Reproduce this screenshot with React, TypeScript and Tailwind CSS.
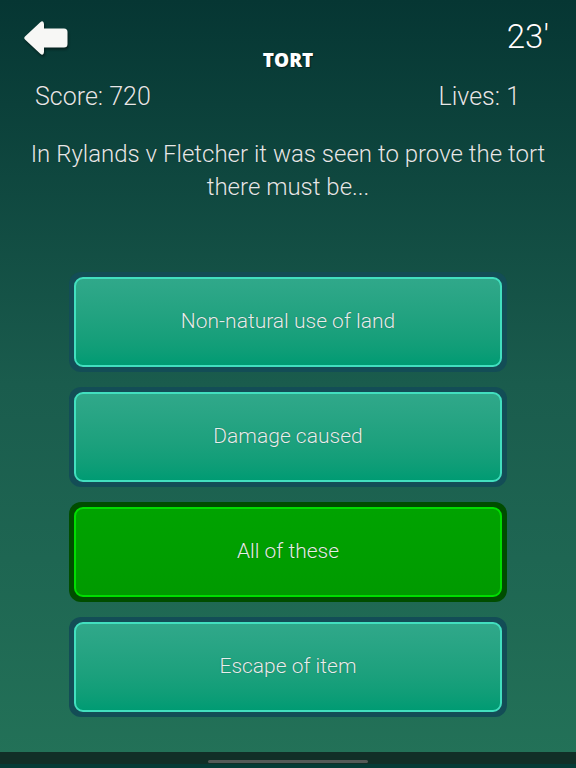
import { useState } from "react";

type Answer = {
  label: string;
  correct?: boolean;
};

const answers: Answer[] = [
  { label: "Non-natural use of land" },
  { label: "Damage caused" },
  { label: "All of these", correct: true },
  { label: "Escape of item" },
];

const BackArrow = () => (
  <svg width="46" height="36" viewBox="0 0 46 36" className="drop-shadow-[1px_2px_1px_rgba(0,0,0,0.45)]">
    <path
      d="M2 19.5 Q0.5 18 2 16.5 L17 2.5 Q20.5 -0.5 21 4 L21 8.5 L41 8.5 Q44.5 8.5 44.5 12 L44.5 24 Q44.5 27.5 41 27.5 L21 27.5 L21 32 Q20.5 36.5 17 33.5 Z"
      fill="#f7f7f5"
    />
  </svg>
);

const AnswerButton = ({ answer }: { answer: Answer }) => {
  const outer = answer.correct ? "bg-[#004d00]" : "bg-[#134d56]";
  const inner = answer.correct
    ? "border-[#00dd00] bg-gradient-to-b from-[#00a300] to-[#009a00]"
    : "border-[#42dfbf] bg-gradient-to-b from-[#30a88a] to-[#009b73]";

  return (
    <button className={`h-[100px] w-[438px] rounded-[12px] p-[5px] ${outer}`}>
      <div
        className={`flex h-full w-full items-center justify-center rounded-[9px] border-2 ${inner}`}
      >
        <span className="text-[21px] font-light text-white/90 [text-shadow:0_0_1px_rgba(0,0,0,0.5)]">
          {answer.label}
        </span>
      </div>
    </button>
  );
};

export default function App() {
  const [score] = useState(720);
  const [lives] = useState(1);

  return (
    <div className="flex h-[768px] w-[576px] flex-col overflow-hidden bg-gradient-to-b from-[#063633] via-[#1a5c4d] to-[#237258] font-['Roboto',sans-serif] text-white">
      <div className="grid grid-cols-[1fr_auto_1fr] px-[23px] pt-[20px]">
        <div>
          <BackArrow />
        </div>
        <h1 className="self-end pt-[31px] font-['Open_Sans',sans-serif] text-[19px] leading-none font-extrabold [text-shadow:1px_1px_1px_rgba(0,0,0,0.5)]">
          TORT
        </h1>
        <div className="pr-[4px] text-right text-[33px] leading-none font-light [text-shadow:0_0_1px_rgba(0,0,0,0.7)]">
          23'
        </div>
      </div>

      <div className="mt-[12px] flex justify-between pr-[56px] pl-[35px] text-[25px] leading-[30px] font-light text-white/90 [text-shadow:0_0_1px_rgba(0,0,0,0.7)]">
        <span>Score: {score}</span>
        <span>Lives: {lives}</span>
      </div>

      <p className="mt-[26px] px-[12px] text-center text-[24px] leading-[33px] font-light text-white/90 [text-shadow:0_0_1px_rgba(0,0,0,0.6)]">
        In Rylands v Fletcher it was seen to prove the tort
        <br />
        there must be...
      </p>

      <div className="mt-[68px] flex flex-col items-center gap-[15px]">
        {answers.map((a) => (
          <AnswerButton key={a.label} answer={a} />
        ))}
      </div>

      <div className="mt-auto flex flex-col">
        <div className="flex h-[12px] items-end justify-center bg-[#112f27]">
          <div className="mb-[1px] h-[3px] w-[160px] rounded-full bg-[#555a58]" />
        </div>
        <div className="h-[4px] bg-[#053b36]" />
      </div>
    </div>
  );
}
